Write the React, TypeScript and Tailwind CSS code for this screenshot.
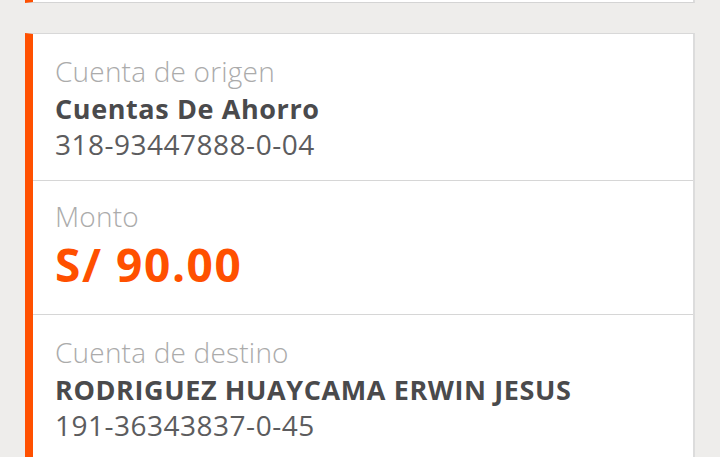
const font = { fontFamily: '"Open Sans", "Noto Sans", sans-serif' };

type Row = { label: string; value: string; sub?: string; amount?: boolean };

const rows: Row[] = [
  { label: 'Cuenta de origen', value: 'Cuentas De Ahorro', sub: '318-93447888-0-04' },
  { label: 'Monto', value: 'S/ 90.00', amount: true },
  { label: 'Cuenta de destino', value: 'RODRIGUEZ HUAYCAMA ERWIN JESUS', sub: '191-36343837-0-45' },
];

export default function App() {
  return (
    <div className="w-[720px] h-[457px] overflow-hidden bg-[#eeedeb] px-[25px]" style={font}>
      {/* previous card, mostly scrolled off */}
      <div className="h-[3px] bg-white border-l-[8px] border-[#ff5000] border-b border-b-[#d4d4d4] border-r-2 border-r-[#dcdcdc]" />

      <div className="mt-[30px] bg-white border-l-[8px] border-[#ff5000] border-t border-t-[#d8d8d8] border-r-2 border-r-[#dcdcdc]">
        {rows.map((r, i) => (
          <div
            key={r.label}
            className={
              'pl-[22px] ' +
              (i === 0 ? 'h-[147px] pt-[19px] ' : i === 1 ? 'h-[134px] pt-[17px] ' : 'h-[150px] pt-[19px] ') +
              (i < rows.length - 1 ? 'border-b border-[#d6d6d6]' : '')
            }
          >
            <div className="text-[28px] leading-[36px] tracking-[0.2px] text-[#ababab] font-light">{r.label}</div>
            {r.amount ? (
              <div className="text-[46px] leading-[60px] font-bold tracking-[1.6px] text-[#ff5000]">{r.value}</div>
            ) : (
              <div className="text-[27px] leading-[39px] font-bold tracking-[0.6px] text-[#4a4a4c]">{r.value}</div>
            )}
            {r.sub && <div className="text-[28px] leading-[32px] tracking-[0.5px] text-[#5c5c5e]">{r.sub}</div>}
          </div>
        ))}
      </div>
    </div>
  );
}
